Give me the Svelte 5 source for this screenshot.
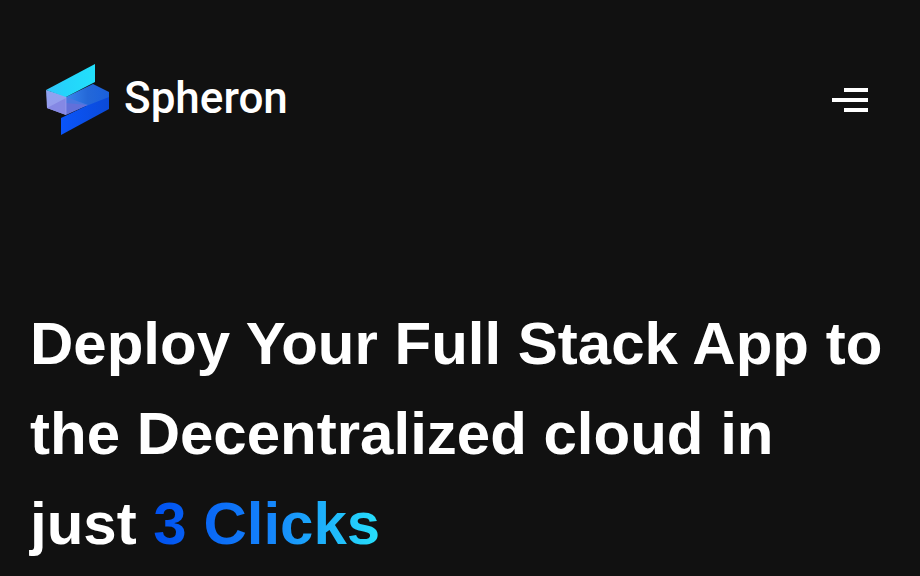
<script>
  let open = $state(false);
</script>

<div class="page">
  <header>
    <a class="brand" href="/">
      <svg width="84" height="84" viewBox="0 0 84 84" aria-hidden="true">
        <defs>
          <linearGradient id="top" x1="0" y1="0" x2="1" y2="0">
            <stop offset="0" stop-color="#35c4fa" />
            <stop offset="0.4" stop-color="#24d4fb" />
            <stop offset="1" stop-color="#22e0fb" />
          </linearGradient>
          <linearGradient id="back" x1="0" y1="0" x2="1" y2="0">
            <stop offset="0" stop-color="#3a86ec" />
            <stop offset="0.5" stop-color="#2468d8" />
            <stop offset="1" stop-color="#1a60dc" />
          </linearGradient>
          <linearGradient id="low" x1="0" y1="0" x2="1" y2="0">
            <stop offset="0" stop-color="#0a55fa" />
            <stop offset="1" stop-color="#0b4ad8" />
          </linearGradient>
          <linearGradient id="left" x1="0" y1="0" x2="0" y2="1">
            <stop offset="0" stop-color="#8fa4f0" />
            <stop offset="1" stop-color="#9a98ea" />
          </linearGradient>
        </defs>
        <path d="M30 41 57 28 73 36V53L50 50 30 58Z" fill="url(#back)" />
        <path d="M30 45 52 49 30 59Z" fill="#6270da" />
        <path d="M30 41 52 49 30 47Z" fill="#4a78e0" />
        <path d="M25 62 50 50 73 41V53L25 79Z" fill="url(#low)" />
        <path d="M10 34 30 40V59L11 52Z" fill="url(#left)" />
        <path d="M11 52 30 42V59Z" fill="#8588e4" />
        <path d="M10 34 59 8V26L30 41Z" fill="url(#top)" />
        <path d="M30 41V58" fill="none" stroke="#a3aaf4" stroke-width="0.6" />
      </svg>
      <span>Spheron</span>
    </a>
    <button class="menu" aria-label="Menu" aria-expanded={open} onclick={() => (open = !open)}>
      <i class="short"></i>
      <i></i>
      <i class="short"></i>
    </button>
  </header>
  <main>
    <h1>Deploy Your Full Stack App to the Decentralized cloud in just <span>3 Clicks</span></h1>
  </main>
</div>

<style>
  :global(body) {
    margin: 0;
    background: #111;
  }

  .page {
    min-height: 100vh;
    box-sizing: border-box;
    overflow: hidden;
    background: #111;
    color: #fff;
    font-family: "Liberation Sans", Arial, sans-serif;
  }

  header {
    display: flex;
    align-items: flex-start;
    justify-content: space-between;
    padding: 56px 52px 0 36px;
  }

  .brand {
    display: flex;
    align-items: center;
    gap: 4px;
    color: #fff;
    text-decoration: none;
    font: 500 44px/84px Roboto, sans-serif;
  }

  .menu {
    display: flex;
    flex-direction: column;
    align-items: flex-end;
    gap: 6px;
    width: 36px;
    padding: 32px 0;
    border: 0;
    background: none;
    cursor: pointer;
  }

  .menu i {
    width: 36px;
    height: 4px;
    background: #fff;
  }

  .menu .short {
    width: 24px;
  }

  main {
    padding: 155px 30px 0;
  }

  h1 {
    margin: 0;
    font-size: 60px;
    font-weight: 700;
    line-height: 90px;
  }

  h1 span {
    background: linear-gradient(90deg, #0050f0, #1482fb 50%, #27e0fb);
    background-clip: text;
    -webkit-background-clip: text;
    color: transparent;
  }
</style>
